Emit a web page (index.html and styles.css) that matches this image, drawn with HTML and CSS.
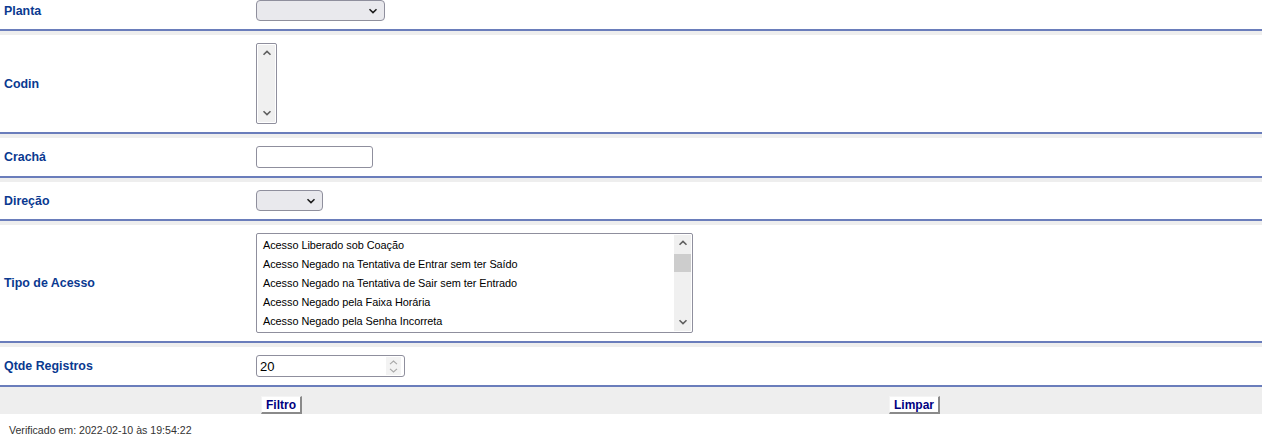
FILE: index.html
```html
<!DOCTYPE html>
<html lang="pt-BR">
<head>
<meta charset="utf-8">
<title>Filtro de Acessos</title>
<link rel="stylesheet" href="styles.css">
</head>
<body>
<div class="form">
  <div class="row row-first">
    <div class="lbl">Planta</div>
    <div class="ctl">
      <div class="select select-planta">
        <svg class="chev" width="10" height="6" viewBox="0 0 10 6"><path d="M1.5 1.2 L5 4.6 L8.5 1.2" fill="none" stroke="#1b1b1b" stroke-width="1.5"/></svg>
      </div>
    </div>
  </div>

  <div class="row">
    <div class="lbl">Codin</div>
    <div class="ctl">
      <div class="listbox listbox-codin">
        <div class="sbar sbar-full">
          <svg class="arr" width="10" height="6" viewBox="0 0 10 6"><path d="M1.5 4.8 L5 1.4 L8.5 4.8" fill="none" stroke="#606060" stroke-width="1.6"/></svg>
          <span class="sbar-space"></span>
          <svg class="arr" width="10" height="6" viewBox="0 0 10 6"><path d="M1.5 1.2 L5 4.6 L8.5 1.2" fill="none" stroke="#606060" stroke-width="1.6"/></svg>
        </div>
      </div>
    </div>
  </div>

  <div class="row">
    <div class="lbl">Crachá</div>
    <div class="ctl"><input class="text text-cracha" type="text" value=""></div>
  </div>

  <div class="row">
    <div class="lbl">Direção</div>
    <div class="ctl">
      <div class="select select-direcao">
        <svg class="chev" width="10" height="6" viewBox="0 0 10 6"><path d="M1.5 1.2 L5 4.6 L8.5 1.2" fill="none" stroke="#1b1b1b" stroke-width="1.5"/></svg>
      </div>
    </div>
  </div>

  <div class="row">
    <div class="lbl">Tipo de Acesso</div>
    <div class="ctl">
      <div class="listbox listbox-tipo">
        <ul class="opts">
          <li>Acesso Liberado sob Coação</li>
          <li>Acesso Negado na Tentativa de Entrar sem ter Saído</li>
          <li>Acesso Negado na Tentativa de Sair sem ter Entrado</li>
          <li>Acesso Negado pela Faixa Horária</li>
          <li>Acesso Negado pela Senha Incorreta</li>
        </ul>
        <div class="sbar">
          <svg class="arr" width="10" height="6" viewBox="0 0 10 6"><path d="M1.5 4.8 L5 1.4 L8.5 4.8" fill="none" stroke="#606060" stroke-width="1.6"/></svg>
          <span class="thumb"></span>
          <span class="sbar-space"></span>
          <svg class="arr" width="10" height="6" viewBox="0 0 10 6"><path d="M1.5 1.2 L5 4.6 L8.5 1.2" fill="none" stroke="#606060" stroke-width="1.6"/></svg>
        </div>
      </div>
    </div>
  </div>

  <div class="row">
    <div class="lbl">Qtde Registros</div>
    <div class="ctl">
      <div class="number">
        <span class="num-val">20</span>
        <span class="spin">
          <svg width="9" height="5" viewBox="0 0 9 5"><path d="M1 4.2 L4.5 1 L8 4.2" fill="none" stroke="#a8a8a8" stroke-width="1.1"/></svg>
          <svg width="9" height="5" viewBox="0 0 9 5"><path d="M1 0.8 L4.5 4 L8 0.8" fill="none" stroke="#a8a8a8" stroke-width="1.1"/></svg>
        </span>
      </div>
    </div>
  </div>

  <div class="actions">
    <div class="act-spacer"></div>
    <div class="act-cell act-filtro"><button class="btn" type="button">Filtro</button></div>
    <div class="act-cell"><button class="btn" type="button">Limpar</button></div>
  </div>
</div>
<p class="footer">Verificado em: 2022-02-10 às 19:54:22</p>
</body>
</html>
```

FILE: styles.css
```css
html, body {
  margin: 0;
  padding: 0;
  background: #ffffff;
}

body {
  font-family: "Liberation Sans", Arial, sans-serif;
  width: 1262px;
}

.form {
  background: #eeeeee;
}

.row {
  display: grid;
  grid-template-columns: 256px 1fr;
  align-items: center;
  background: #ffffff;
  padding: 8px 0;
  border-bottom: 2px solid #6a7dbb;
  margin-bottom: 4px;
}

.row-first {
  padding-top: 0;
}

.lbl {
  padding-left: 4px;
  font-weight: bold;
  font-size: 12.4px;
  color: #0a3990;
}

.ctl {
  display: flex;
  align-items: center;
}

/* fake select */
.select {
  box-sizing: border-box;
  height: 21px;
  background: #e9e9ed;
  border: 1px solid #8f8f9d;
  border-radius: 4px;
  display: flex;
  align-items: center;
  justify-content: flex-end;
  padding-right: 6px;
}

.select-planta { width: 129px; }
.select-direcao { width: 67px; }

/* listbox */
.listbox {
  box-sizing: border-box;
  border: 1px solid #8f8f9d;
  border-radius: 2px;
  background: #ffffff;
  display: flex;
  overflow: hidden;
}

.listbox-codin {
  width: 21px;
  height: 81px;
  padding: 1px;
}

.listbox-tipo {
  width: 437px;
  height: 100px;
  padding: 1px;
}

.sbar {
  width: 17px;
  background: #f0f0f0;
  display: flex;
  flex-direction: column;
  align-items: center;
  padding: 5px 0 6px;
  box-sizing: border-box;
}

.sbar-full {
  width: 100%;
}

.sbar-space {
  flex: 1;
}

.thumb {
  display: block;
  width: 17px;
  height: 18px;
  margin-top: 8px;
  background: #cdcdcd;
}

.opts {
  list-style: none;
  margin: 0;
  padding: 1px 0 0 5px;
  flex: 1;
  font-size: 10.9px;
  letter-spacing: -0.05px;
  color: #000000;
}

.opts li {
  height: 19px;
  line-height: 19px;
  white-space: nowrap;
}

/* text input */
.text {
  box-sizing: border-box;
  margin: 0;
  height: 22px;
  border: 1px solid #8f8f9d;
  border-radius: 3px;
  background: #ffffff;
  font-family: "Liberation Sans", Arial, sans-serif;
  font-size: 13px;
  padding: 0 3px;
}

.text-cracha { width: 117px; }

/* number input */
.number {
  box-sizing: border-box;
  width: 149px;
  height: 22px;
  border: 1px solid #8f8f9d;
  border-radius: 3px;
  background: #ffffff;
  display: flex;
  align-items: center;
  padding: 0 3px 0 3px;
}

.num-val {
  flex: 1;
  font-size: 13px;
  color: #000000;
}

.spin {
  width: 15px;
  height: 18px;
  background: #f3f3f3;
  display: flex;
  flex-direction: column;
  align-items: center;
  justify-content: center;
  gap: 3px;
}

.spin svg { display: block; }

/* buttons row */
.actions {
  display: grid;
  grid-template-columns: 256px 633px 1fr;
  align-items: end;
  padding-top: 5px;
  background: #eeeeee;
}

.act-filtro {
  padding-left: 5px;
}

.btn {
  display: block;
  box-sizing: border-box;
  height: 18px;
  margin: 0;
  padding: 0 4px;
  background: #ffffff;
  border-style: solid;
  border-color: #f4f4f4 #8a8a8a #8a8a8a #f4f4f4;
  border-width: 1px 2px 2px 1px;
  font-family: "Liberation Sans", Arial, sans-serif;
  font-weight: bold;
  font-size: 12px;
  color: #000080;
  line-height: 14px;
}

.footer {
  margin: 0;
  padding: 10px 0 0 9px;
  font-size: 10.6px;
  color: #333333;
}
```
